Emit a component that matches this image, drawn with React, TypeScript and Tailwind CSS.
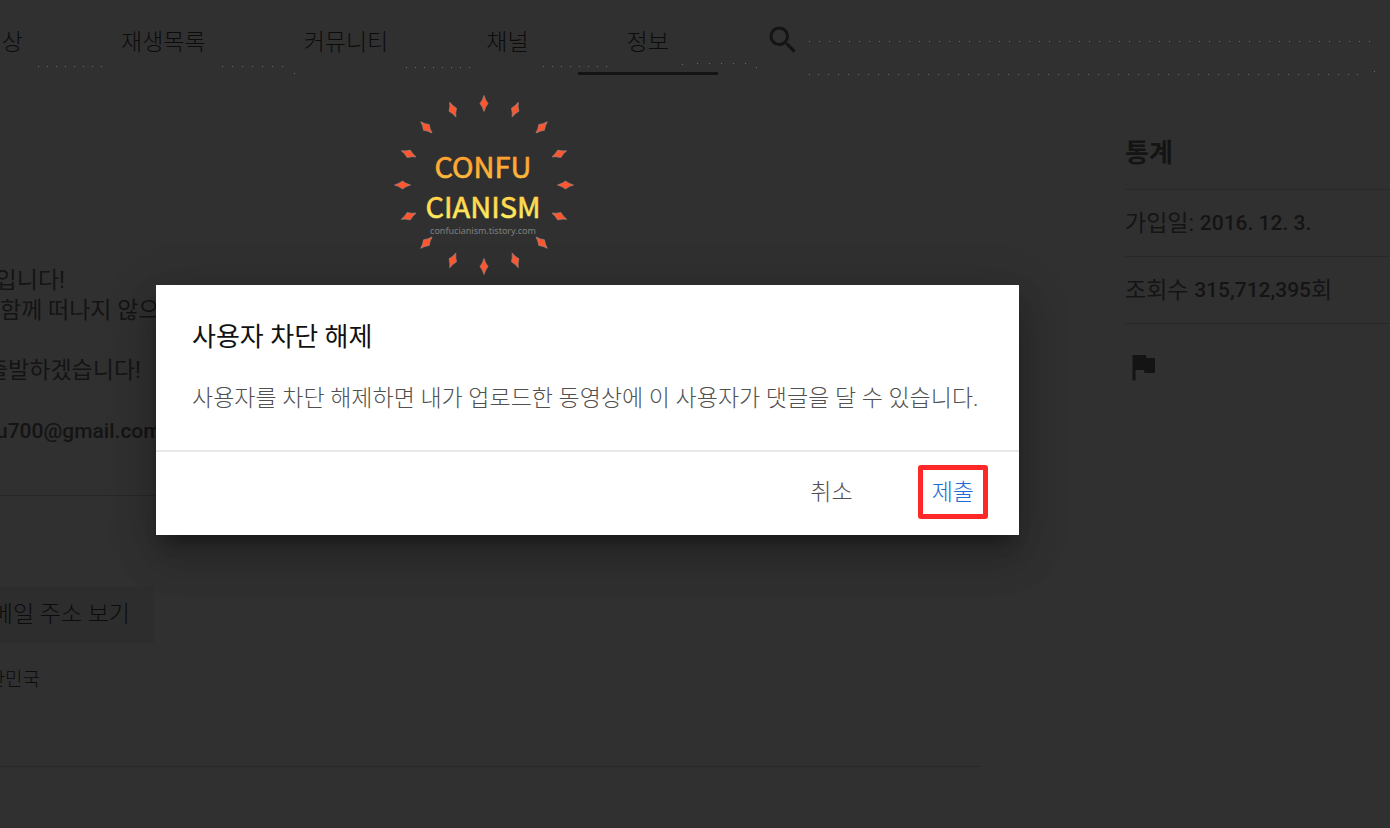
import { MdFlag, MdSearch } from 'react-icons/md';

interface DotRow {
  x: number;
  y: number;
  step: number;
  count: number;
}

const tabs = ['재생목록', '커뮤니티', '채널', '정보'];

const dotRows: DotRow[] = [
  { x: 38, y: 66, step: 9, count: 8 },
  { x: 222, y: 66, step: 10, count: 7 },
  { x: 294, y: 73, step: 10, count: 1 },
  { x: 406, y: 67, step: 9, count: 8 },
  { x: 543, y: 66, step: 9, count: 8 },
  { x: 682, y: 64, step: 10, count: 1 },
  { x: 697, y: 63, step: 12, count: 5 },
  { x: 756, y: 67, step: 10, count: 1 },
  { x: 809, y: 41, step: 10, count: 57 },
  { x: 809, y: 74, step: 10, count: 1 },
  { x: 818, y: 74, step: 10, count: 54 },
  { x: 1357, y: 74, step: 10, count: 1 },
  { x: 1374, y: 71, step: 10, count: 1 },
];

const rays = Array.from({ length: 16 }, (_, i) => i * 22.5);

function HeaderDots() {
  return (
    <svg
      className="pointer-events-none absolute top-0 left-0 h-20 w-[1390px]"
      viewBox="0 0 1390 80"
      shapeRendering="crispEdges"
      aria-hidden="true"
    >
      {dotRows.map((row) =>
        Array.from({ length: row.count }, (_, i) => (
          <rect key={`${row.x}-${row.y}-${i}`} x={row.x + i * row.step} y={row.y} width="1" height="1" fill="#6b6b6b" />
        ))
      )}
    </svg>
  );
}

function Logo() {
  return (
    <svg className="ml-[238px] size-[180px]" viewBox="0 0 180 180" role="img" aria-label="CONFUCIANISM">
      <defs>
        <linearGradient id="logo-fill" gradientUnits="userSpaceOnUse" x1="0" y1="58" x2="0" y2="126">
          <stop offset="0" stopColor="#ff9a2c" />
          <stop offset="0.65" stopColor="#ffd24a" />
          <stop offset="1" stopColor="#fbf063" />
        </linearGradient>
      </defs>
      {rays.map((angle) => (
        <path
          key={angle}
          d="M90 0.5Q91.2 5 94 8.5Q91.2 12 90 16.5Q88.8 12 86 8.5Q88.8 5 90 0.5Z"
          transform={`rotate(${angle} 90 90)`}
          fill="#ff5630"
          stroke="#a08078"
          strokeWidth="0.7"
        />
      ))}
      <g
        fill="url(#logo-fill)"
        stroke="url(#logo-fill)"
        strokeWidth="0.6"
        textAnchor="middle"
        fontFamily="'Noto Sans CJK KR', sans-serif"
        fontSize="29"
      >
        <text x="89" y="83">CONFU</text>
        <text x="89" y="123">CIANISM</text>
      </g>
      <text x="89" y="139" fontSize="9" fill="#808080" textAnchor="middle" fontFamily="'Noto Sans', sans-serif">
        confucianism.tistory.com
      </text>
    </svg>
  );
}

function ChannelHeader() {
  return (
    <header className="flex h-[75px] items-stretch">
      <nav className="flex text-[23px] font-light text-[#0c0c0c]">
        <button type="button" className="w-[72px] pt-3 pr-[49px] text-right">상</button>
        {tabs.map((tab) => (
          <button
            key={tab}
            type="button"
            className={
              tab === '정보'
                ? 'border-b-3 border-[#141414] px-[49px] pt-[15px]'
                : 'px-[49px] pt-3'
            }
          >
            {tab}
          </button>
        ))}
      </nav>
      <button type="button" aria-label="검색" className="ml-[47px] pt-[5px]">
        <MdSearch className="size-9" />
      </button>
    </header>
  );
}

function Description() {
  return (
    <section className="min-w-0 pt-[191px]">
      <div className="h-[230px] border-b border-[#282828] text-[23px] leading-[30px] whitespace-nowrap">
        <p className="flex w-[65px] justify-end">입니다!</p>
        <p>함께 떠나지 않으</p>
        <p className="mt-[30px] flex w-[141px] justify-end">출발하겠습니다!</p>
        <p className="mt-[30px] -ml-1 text-[21px] font-medium">u700@gmail.com</p>
      </div>
      <div className="h-[271px] border-b border-[#282828] pt-[91px] whitespace-nowrap">
        <button
          type="button"
          className="flex h-14 w-[154px] items-center justify-end bg-[#2d2d2d] pr-6 text-[23px] font-light text-[#0c0c0c]"
        >
          메일 주소 보기
        </button>
        <p className="mt-[22px] flex w-10 justify-end text-[19px] leading-[30px] font-light text-[#0c0c0c]">한민국</p>
      </div>
    </section>
  );
}

function Stats() {
  return (
    <aside className="pt-10 whitespace-nowrap">
      <h2 className="flex h-[75px] items-center border-b border-[#282828] pt-0.5 text-[26px] font-bold">통계</h2>
      <p className="flex h-[67px] items-center border-b border-[#282828] pt-0.5 text-[23px]">
        가입일:&nbsp;<span className="text-[21px] font-medium">2016. 12. 3.</span>
      </p>
      <p className="flex h-[67px] items-center border-b border-[#282828] pt-0.5 text-[23px]">
        조회수&nbsp;<span className="text-[21px] font-medium">315,712,395</span>회
      </p>
      <button type="button" aria-label="신고" className="mt-[25px]">
        <MdFlag className="size-9" />
      </button>
    </aside>
  );
}

function UnblockDialog() {
  return (
    <div
      role="dialog"
      aria-labelledby="dialog-title"
      className="mt-[10px] w-[863px] max-w-full bg-white shadow-[0_24px_36px_3px_rgba(0,0,0,0.14),0_9px_45px_8px_rgba(0,0,0,0.12),0_12px_15px_-8px_rgba(0,0,0,0.4)]"
    >
      <div className="border-b-2 border-[#e8e8e8] px-9 pt-[34px] pb-[35px]">
        <h1 id="dialog-title" className="text-[26px] leading-9 text-[#111111]">사용자 차단 해제</h1>
        <p className="mt-[27px] text-[23px] leading-[33px] font-light text-[#505050]">
          사용자를 차단 해제하면 내가 업로드한 동영상에 이 사용자가 댓글을 달 수 있습니다.
        </p>
      </div>
      <div className="flex justify-end gap-[52px] pt-[13px] pr-[31px] pb-4 text-[23px] font-light">
        <button type="button" className="h-[54px] px-[13px] pt-[3px] text-[#505050]">취소</button>
        <button type="button" className="h-[54px] rounded-[3px] border-5 border-[#ff2828] px-[9px] pt-[3px] text-[#1c6bd8]">
          제출
        </button>
      </div>
    </div>
  );
}

export default function App() {
  return (
    <div className="relative min-h-screen overflow-hidden bg-[#303030] font-[Roboto,'Noto_Sans_CJK_KR',sans-serif] text-[#141414]">
      <ChannelHeader />
      <HeaderDots />
      <main className="grid grid-cols-[minmax(0,1fr)_265px] gap-36">
        <Description />
        <Stats />
      </main>
      <div className="absolute inset-0 pt-[95px] pl-[156px]">
        <Logo />
        <UnblockDialog />
      </div>
    </div>
  );
}
